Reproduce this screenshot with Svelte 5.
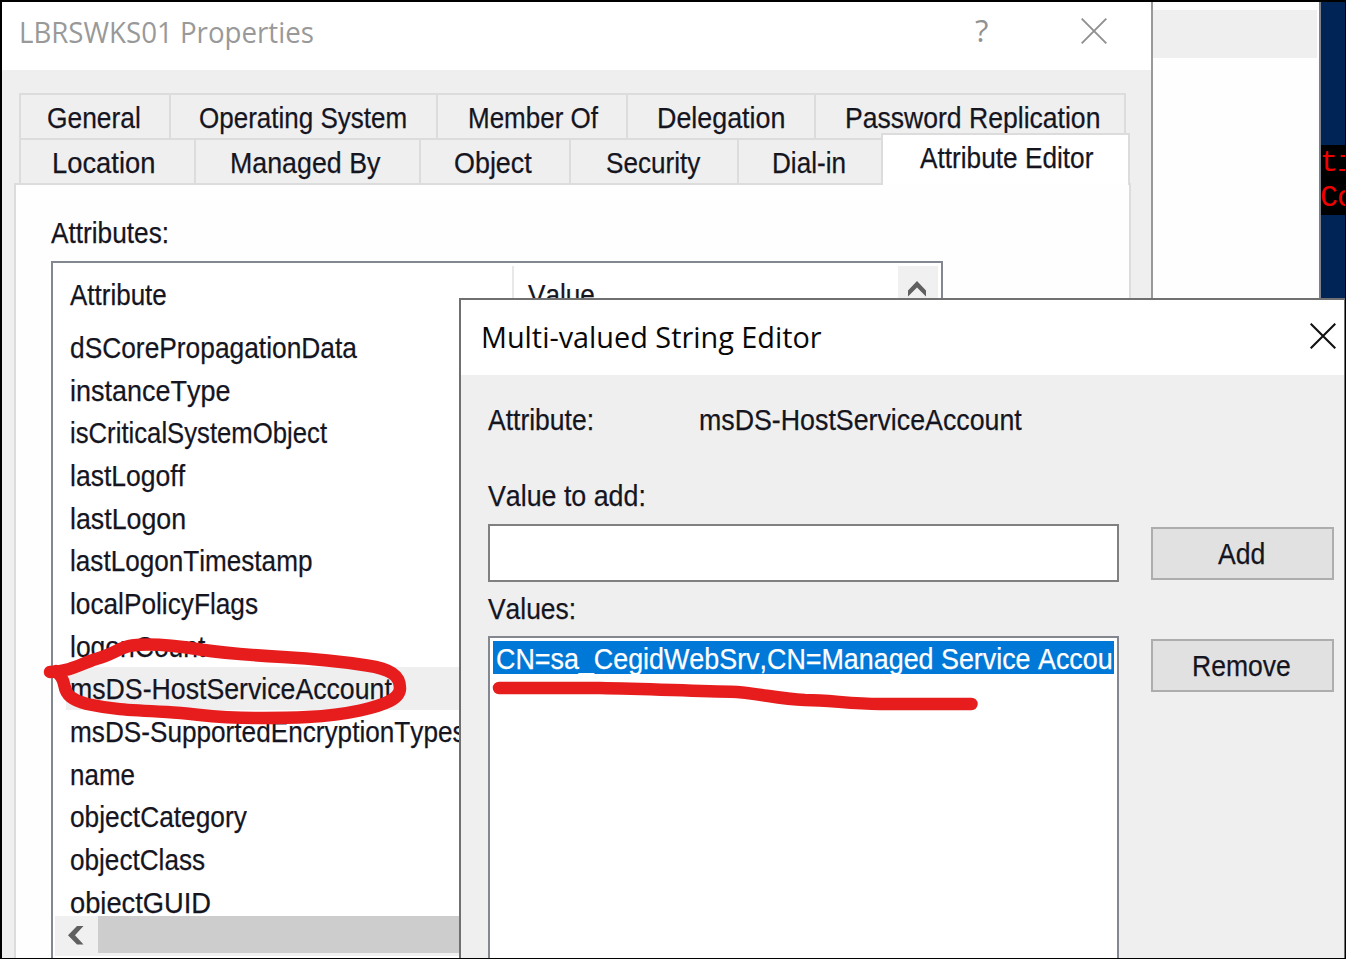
<script>
  // Squeezes a label horizontally so that it takes the given width.
  function fit(node, width) {
    const scale = width / node.offsetWidth;
    node.style.transform = `scaleX(${scale})`;
  }

  const backTabs = [
    { name: 'General', width: 150, pad: 26, text: 94 },
    { name: 'Operating System', width: 267, pad: 28, text: 208 },
    { name: 'Member Of', width: 190, pad: 30, text: 130 },
    { name: 'Delegation', width: 188, pad: 29, text: 128 },
    { name: 'Password Replication', width: 312, pad: 29, text: 255 }
  ];
  const frontTabs = [
    { name: 'Location', width: 175, pad: 31, text: 103 },
    { name: 'Managed By', width: 225, pad: 34, text: 150 },
    { name: 'Object', width: 150, pad: 33, text: 78 },
    { name: 'Security', width: 168, pad: 35, text: 94 },
    { name: 'Dial-in', width: 144, pad: 33, text: 74 }
  ];
  const attributes = [
    ['dSCorePropagationData', 287],
    ['instanceType', 160],
    ['isCriticalSystemObject', 257],
    ['lastLogoff', 115],
    ['lastLogon', 116],
    ['lastLogonTimestamp', 242],
    ['localPolicyFlags', 188],
    ['logonCount', 135],
    ['msDS-HostServiceAccount', 322],
    ['msDS-SupportedEncryptionTypes', 396],
    ['name', 65],
    ['objectCategory', 177],
    ['objectClass', 135],
    ['objectGUID', 141]
  ];
  const selected = 'msDS-HostServiceAccount';
</script>

{#snippet label(text, width)}
  <span class="label" style="width:{width}px"><span class="run" use:fit={width}>{text}</span></span>
{/snippet}

{#snippet tab(t)}
  <div class="tab" style="width:{t.width}px; padding-left:{t.pad}px">{@render label(t.name, t.text)}</div>
{/snippet}

<div class="screen">
  <div class="band"></div>

  <div class="console">
    <div class="error"><div>ti</div><div>Co</div></div>
  </div>

  <section class="properties">
    <header class="titlebar">
      <span class="title inactive">{@render label('LBRSWKS01 Properties', 295)}</span>
      <span class="help">{@render label('?', 13)}</span>
      <svg class="close" width="26" height="26" viewBox="0 0 26 26"><path d="M0.7 0.7L25.3 25.3M25.3 0.7L0.7 25.3" stroke="#8f8f8f" stroke-width="1.9" /></svg>
    </header>
    <div class="tabs">
      <div class="row back">{#each backTabs as t}{@render tab(t)}{/each}</div>
      <div class="row front">
        {#each frontTabs as t}{@render tab(t)}{/each}
        <div class="active">{@render label('Attribute Editor', 173)}</div>
      </div>
    </div>
    <div class="panel">
      <div class="caption">{@render label('Attributes:', 118)}</div>
      <div class="listview">
        <div class="columns">
          <div class="col first">{@render label('Attribute', 97)}</div>
          <div class="col second">{@render label('Value', 67)}</div>
          <div class="up">
            <svg width="18" height="16" viewBox="0 0 18 16"><path d="M0 9.5L9 0L18 9.5V15.5L9 6.5L0 15.5Z" fill="#606060" /></svg>
          </div>
        </div>
        <div class="items">
          {#each attributes as [name, width]}
            <div class="item" class:current={name === selected}>{@render label(name, width)}</div>
          {/each}
        </div>
        <div class="hscroll">
          <svg width="16" height="19" viewBox="0 0 16 19"><path d="M9 0H15.5L7 9.3L15.5 18.5H9L0 9.3Z" fill="#606060" /></svg>
          <div class="thumb"></div>
        </div>
      </div>
    </div>
  </section>

  <section class="dialog">
    <header class="titlebar">
      <span class="title">{@render label('Multi-valued String Editor', 341)}</span>
      <svg class="close" width="26" height="26" viewBox="0 0 26 26"><path d="M0.7 0.7L25.3 25.3M25.3 0.7L0.7 25.3" stroke="#111" stroke-width="2.1" /></svg>
    </header>
    <div class="content">
      <div class="field">
        <span class="key">{@render label('Attribute:', 106)}</span>
        {@render label('msDS-HostServiceAccount', 323)}
      </div>
      <div class="caption add">{@render label('Value to add:', 158)}</div>
      <div class="line">
        <div class="input"></div>
        <div class="button">{@render label('Add', 47)}</div>
      </div>
      <div class="caption values">{@render label('Values:', 88)}</div>
      <div class="line grow">
        <div class="listbox">
          <div class="choice">{@render label('CN=sa_CegidWebSrv,CN=Managed Service Accou', 617)}</div>
        </div>
        <div class="button">{@render label('Remove', 99)}</div>
      </div>
    </div>
  </section>

  <svg class="ink" width="1346" height="959" viewBox="0 0 1346 959">
    <path d="M50 672C72 671 80 664 96 659C112 655 120 647 132 645.5C150 643 178 646 200 649.5C230 654 256 655.500 283 657C310 658.500 345 662 367 665.500C390 669 400 675 400 688C400 699 385 705 360 710.500C325 718 290 718 255 718C212 718 200 714 167 712C125 710 110 709 87 704C72 700 66 695 64.500 686C63 678 60 675 56 671" />
    <path d="M499 688H600C650 689 690 691 737 692C762 694 779 699 805 700C830 700 850 704 880 704H971.500" />
  </svg>
</div>

<style>
  :global(body) { margin: 0; }
  .screen {
    position: relative;
    box-sizing: border-box;
    width: 1346px;
    height: 959px;
    overflow: hidden;
    background: #fefefe;
    font: 30px/42px "Liberation Sans", Arial, sans-serif;
    font-kerning: none;
    color: #15151f;
  }
  .screen::after {
    content: "";
    position: absolute;
    inset: 0;
    border: solid #000;
    border-width: 2px 1px 1px 2px;
  }
  .screen :global(*) { box-sizing: border-box; }
  .label { display: inline-block; white-space: nowrap; flex: none; }
  .run { display: inline-block; transform-origin: 0 50%; -webkit-text-stroke: 0.25px currentColor; }
  .title .run, .help .run { -webkit-text-stroke: 0; }

  .band { position: absolute; left: 1153px; top: 10px; width: 164px; height: 48px; background: #efefef; }
  .console {
    position: absolute;
    left: 1319px;
    top: 0;
    width: 27px;
    height: 300px;
    padding-top: 145px;
    border-left: 2px solid #7b828c;
    background: #012456;
    overflow: hidden;
  }
  .error { height: 70px; padding-top: 1px; background: #000; color: #f00000; font: 30px/35px "Liberation Mono", monospace; }
  .error div { margin-left: -1px; letter-spacing: -1px; }

  .properties {
    position: absolute;
    left: 2px;
    top: 2px;
    width: 1151px;
    height: 957px;
    display: flex;
    flex-direction: column;
    background: #efefef;
    border-right: 2px solid #999;
  }
  .titlebar { display: flex; background: #fff; flex: none; }
  .properties .titlebar { height: 68px; padding-left: 17px; }
  .title { font: 30px/42px "Open Sans", "Noto Sans", sans-serif; color: #080808; }
  .title.inactive { color: #999; padding-top: 9px; width: 956px; }
  .help { font: 31px/42px "Open Sans", sans-serif; color: #919191; padding-top: 7px; width: 106px; }
  .properties .close { margin-top: 16px; }

  .tabs { padding: 23px 0 0 17px; height: 113px; flex: none; }
  .row { display: flex; height: 45px; }
  .tab { height: 45px; line-height: 46px; border-left: 2px solid #dcdcdc; border-top: 2px solid #dcdcdc; flex: none; }
  .back .tab:last-child { border-right: 2px solid #dcdcdc; width: 312px; }
  .active {
    width: 249px;
    height: 52px;
    margin-top: -5px;
    padding-left: 37px;
    line-height: 45px;
    background: #fff;
    border: 2px solid #dcdcdc;
    border-bottom: 0;
    position: relative;
    z-index: 1;
  }
  .panel {
    flex: 1;
    min-height: 0;
    width: 1117px;
    margin-left: 12px;
    padding: 27px 0 0 35px;
    background: #fefefe;
    border: 2px solid #dcdcdc;
    border-bottom: 0;
  }
  .panel .caption { height: 49px; }
  .listview { width: 892px; height: 700px; border: 2px solid #828790; background: #fff; }
  .columns { display: flex; height: 63px; padding-top: 3px; }
  .col { padding-top: 8px; }
  .first { width: 459px; padding-left: 17px; }
  .second { width: 386px; padding-left: 14px; border-left: 2px solid #e8e8e8; }
  .up { width: 40px; background: #f0f0f0; padding: 15px 0 0 10px; line-height: 0; }
  .items { height: 588px; overflow: hidden; padding-left: 13px; }
  .item { height: 42.66px; line-height: 44px; padding-left: 4px; }
  .item.current { background: #efefef; }
  .hscroll { display: flex; height: 40px; margin: 2px 0 0 2px; background: #f0f0f0; }
  .hscroll svg { margin: 10px 14px 0 13px; flex: none; }
  .thumb { width: 700px; height: 37px; background: #cdcdcd; }

  .dialog {
    position: absolute;
    left: 459px;
    top: 298px;
    width: 886px;
    height: 661px;
    display: flex;
    flex-direction: column;
    background: #efefef;
    border: 2px solid #707070;
    border-width: 2px 1px 0 2px;
  }
  .dialog .titlebar { height: 75px; padding-left: 20px; }
  .dialog .title { padding-top: 16px; width: 829px; }
  .dialog .close { margin-top: 23px; }
  .content { flex: 1; display: flex; flex-direction: column; padding: 24px 0 0 27px; min-height: 0; }
  .field { display: flex; height: 76px; }
  .key { width: 211px; }
  .caption.add { height: 48.500px; }
  .line { display: flex; gap: 32px; align-items: flex-start; }
  .input { width: 631px; height: 58px; background: #fff; border: 2px solid #808080; }
  .button { width: 183px; height: 53px; margin-top: 3px; padding-right: 3px; display: flex; justify-content: center; line-height: 50px; background: #e1e1e1; border: 2px solid #adadad; }
  .caption.values { height: 54.500px; padding-top: 6px; }
  .grow { flex: 1; min-height: 0; }
  .listbox { width: 631px; height: 400px; background: #fff; border: 2px solid #828790; padding: 3px; }
  .choice { height: 33px; line-height: 36px; padding-left: 3px; background: #0078d7; color: #fff; overflow: hidden; }
  .ink { position: absolute; left: 0; top: 0; fill: none; stroke: #e71d1d; stroke-width: 12.500px; stroke-linecap: round; stroke-linejoin: round; }
</style>
